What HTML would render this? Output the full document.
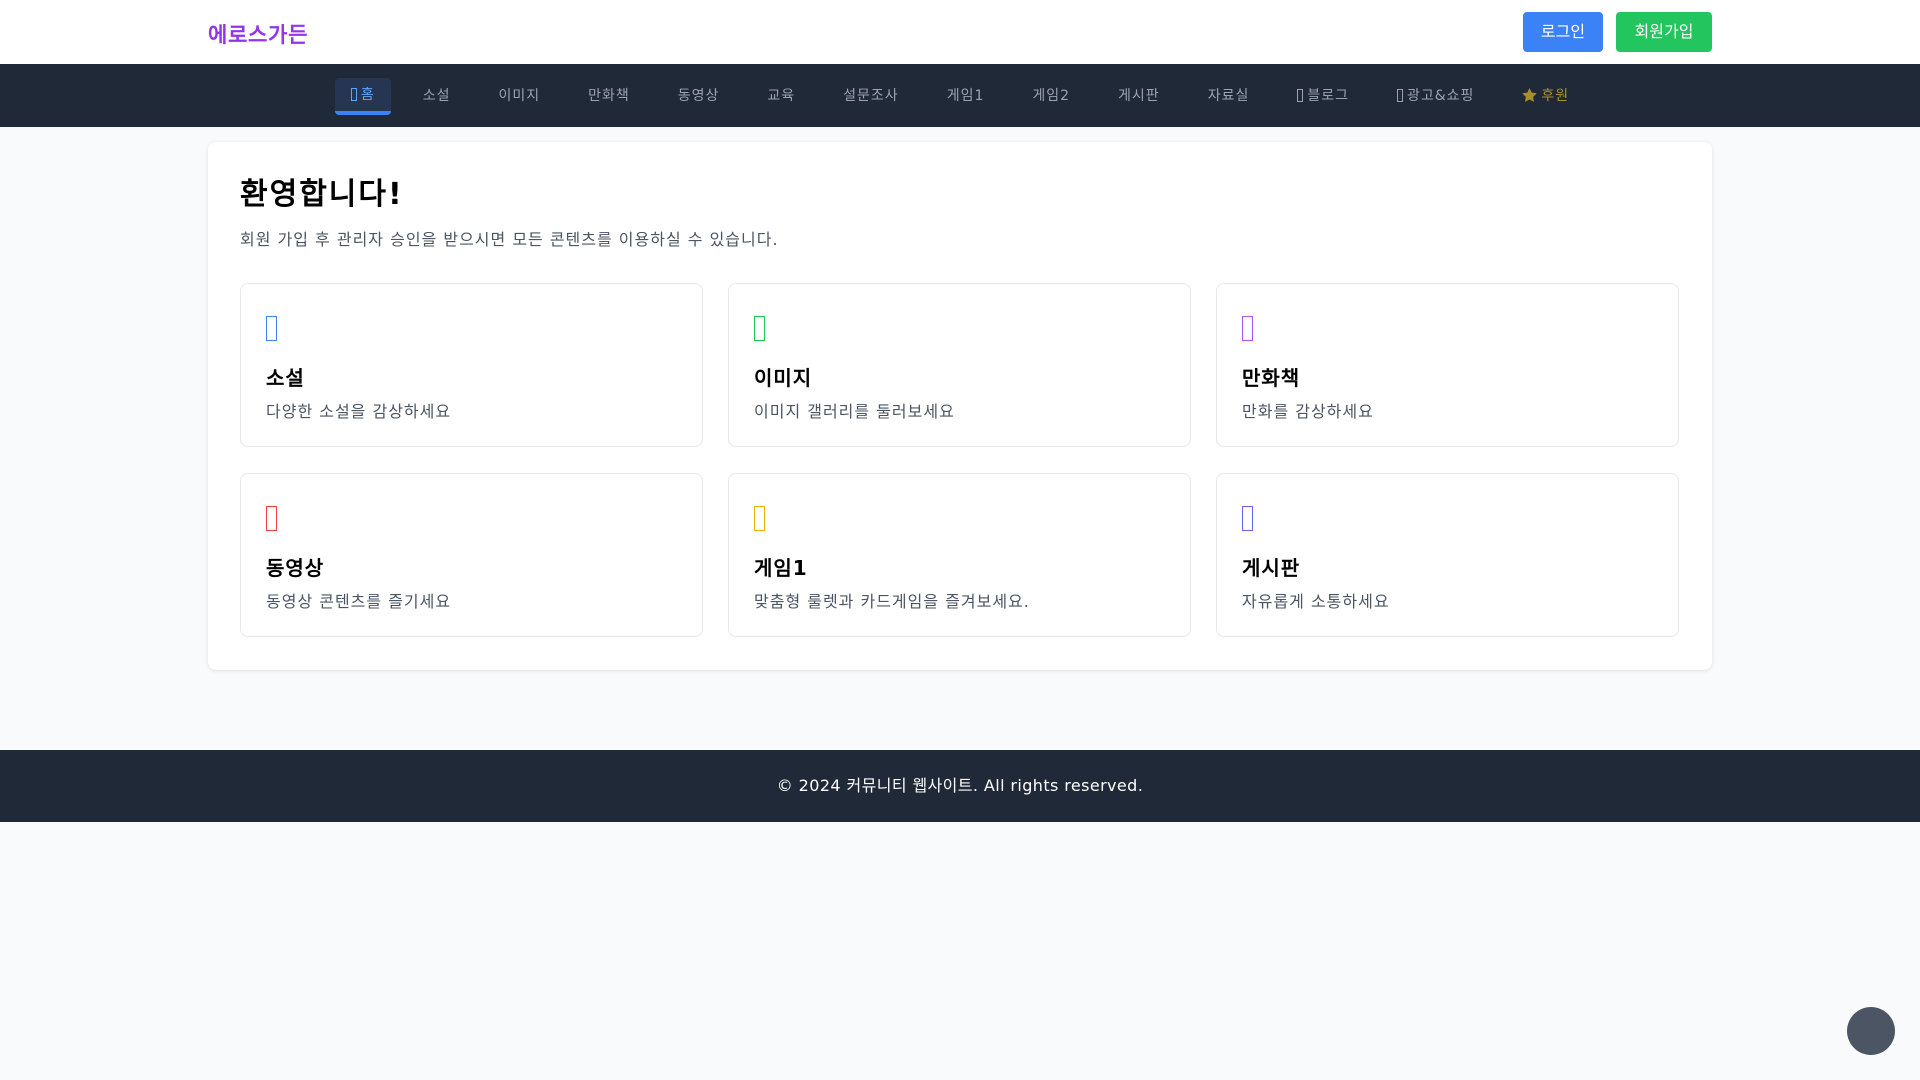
<!DOCTYPE html>
<html><head><meta charset="utf-8"><style>
*{box-sizing:border-box;margin:0;padding:0}
body{width:1920px;height:1080px;background:#f9fafb;font-family:"DejaVu Sans","WenQuanYi Zen Hei",sans-serif;position:relative;overflow:hidden}
.hdr{height:64px;background:#fff;position:relative}
.logo{position:absolute;left:208px;top:19px;font-size:21px;font-weight:bold;color:#9333ea;letter-spacing:.7px}
.btn{position:absolute;top:12px;height:40px;border-radius:4px;color:#fff;font-size:16px;line-height:40px;text-align:center}
.nav{height:63px;background:#1f2937;display:flex;justify-content:center;align-items:center;gap:16px}
.nav a{font-size:14px;color:#9ca3af;padding:0 16px;height:37px;line-height:37px;border-radius:4px;text-decoration:none;white-space:nowrap;margin-top:1px;letter-spacing:1px}
.nav a.act{background:#253552;color:#60a5fa;border-bottom:4px solid #3b82f6;line-height:35px}
.box{display:inline-block;width:6px;height:13px;border:1px solid currentColor;vertical-align:-2px;margin-right:4px}
.main{position:absolute;left:208px;top:142px;width:1504px;height:528px;background:#fff;border-radius:8px;box-shadow:0 1px 4px rgba(0,0,0,.1)}
h1{font-size:30px;font-weight:bold;color:#000;line-height:36px;position:absolute;top:35px;left:32px;letter-spacing:2px}
.sub{position:absolute;top:84px;left:32px;font-size:16px;color:#4b5563;letter-spacing:1px}
.card{position:absolute;width:463px;height:164px;border:1px solid #e5e7eb;border-radius:8px;background:#fff}
.ic{position:absolute;left:25px;top:32px;width:11px;height:25px;border:1.5px solid}
.ct{position:absolute;left:25px;top:78px;font-size:20px;font-weight:bold;color:#000;letter-spacing:1px}
.cd{position:absolute;left:25px;top:114px;font-size:16px;color:#4b5563;letter-spacing:1px}
.foot{position:absolute;left:0;top:750px;width:1920px;height:72px;background:#1f2937;color:#fff;font-size:16px;text-align:center;line-height:72px;letter-spacing:.4px}
.top{position:absolute;left:1847px;top:1007px;width:48px;height:48px;border-radius:50%;background:#4b5563}
</style></head><body>
<div class="hdr"><div class="logo">에로스가든</div>
<div class="btn" style="left:1523px;width:80px;background:#3b82f6">로그인</div>
<div class="btn" style="left:1616px;width:96px;background:#22c55e">회원가입</div></div>
<div class="nav">
<a class="act"><span class="box"></span>홈</a><a>소설</a><a>이미지</a><a>만화책</a><a>동영상</a><a>교육</a><a>설문조사</a><a>게임1</a><a>게임2</a><a>게시판</a><a>자료실</a><a><span class="box"></span>블로그</a><a><span class="box"></span>광고&amp;쇼핑</a><a style="color:#a98f2a"><svg width="15" height="14" viewBox="0 0 24 23" style="vertical-align:-2px;margin-right:4px"><path d="M12 0l3.7 7.5 8.3 1.2-6 5.8 1.4 8.3L12 18.9l-7.4 3.9L6 14.5 0 8.7l8.3-1.2z" fill="#a98f2a"/></svg>후원</a>
</div>
<div class="main">
<h1>환영합니다!</h1>
<div class="sub">회원 가입 후 관리자 승인을 받으시면 모든 콘텐츠를 이용하실 수 있습니다.</div>
<div class="card" style="left:32px;top:141px"><div class="ic" style="color:#3b82f6"></div><div class="ct">소설</div><div class="cd">다양한 소설을 감상하세요</div></div>
<div class="card" style="left:520px;top:141px"><div class="ic" style="color:#22c55e"></div><div class="ct">이미지</div><div class="cd">이미지 갤러리를 둘러보세요</div></div>
<div class="card" style="left:1008px;top:141px"><div class="ic" style="color:#a855f7"></div><div class="ct">만화책</div><div class="cd">만화를 감상하세요</div></div>
<div class="card" style="left:32px;top:331px"><div class="ic" style="color:#ef4444"></div><div class="ct">동영상</div><div class="cd">동영상 콘텐츠를 즐기세요</div></div>
<div class="card" style="left:520px;top:331px"><div class="ic" style="color:#eab308"></div><div class="ct">게임1</div><div class="cd">맞춤형 룰렛과 카드게임을 즐겨보세요.</div></div>
<div class="card" style="left:1008px;top:331px"><div class="ic" style="color:#6366f1"></div><div class="ct">게시판</div><div class="cd">자유롭게 소통하세요</div></div>
</div>
<div class="foot">© 2024 커뮤니티 웹사이트. All rights reserved.</div>
<div class="top"></div>
</body></html>
